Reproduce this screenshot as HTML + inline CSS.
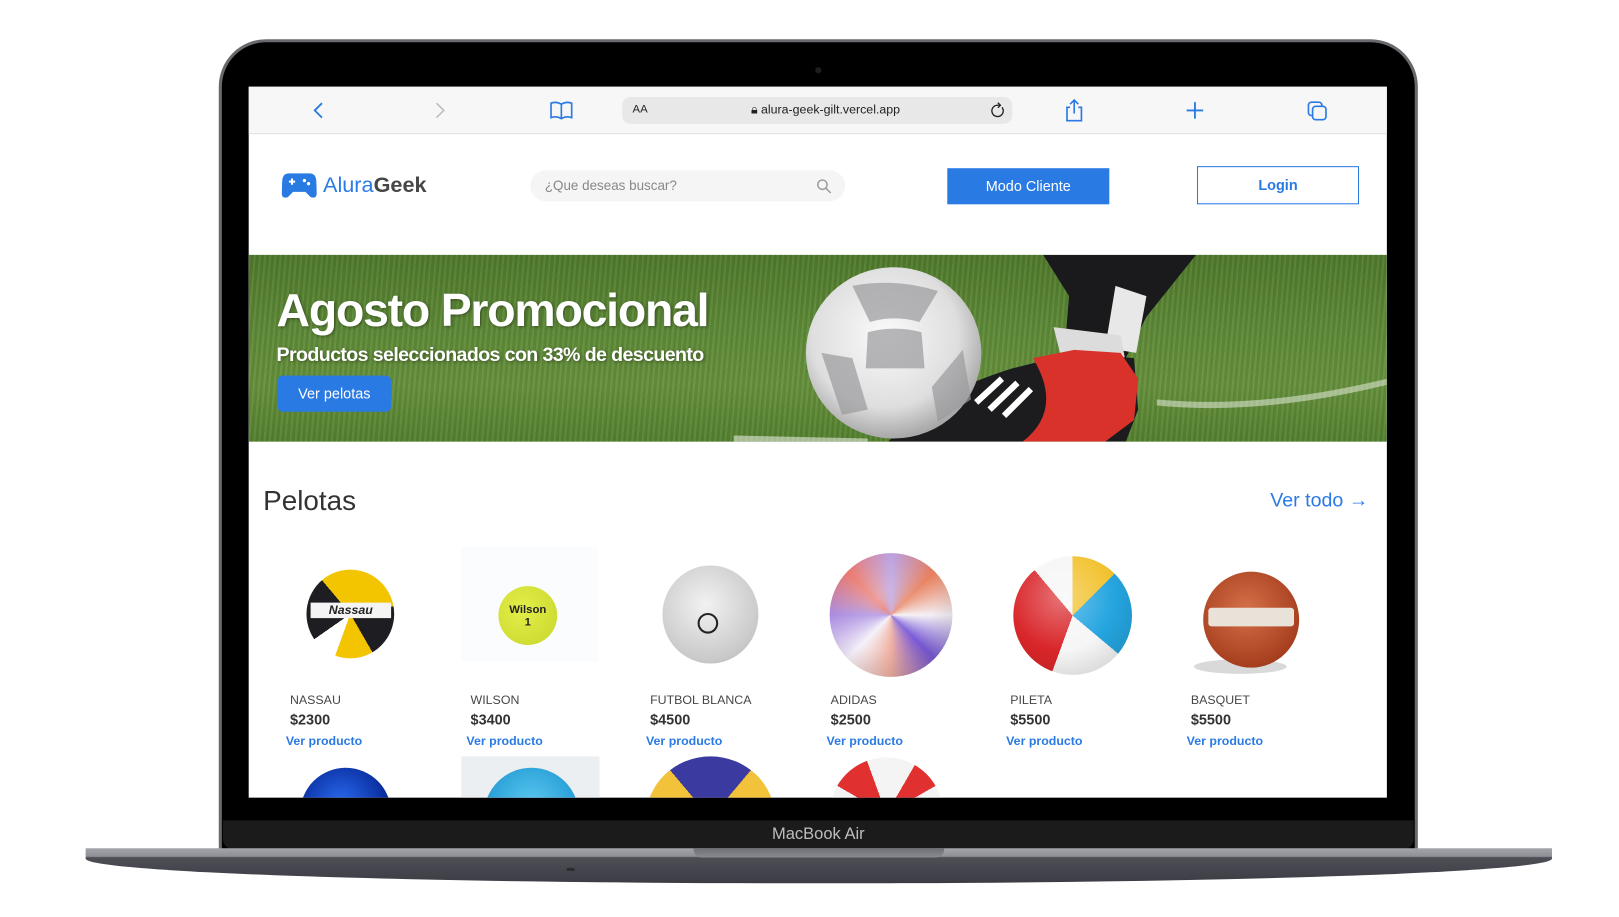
<!DOCTYPE html>
<html><head><meta charset="utf-8">
<style>
*{margin:0;padding:0;box-sizing:border-box}
html,body{width:1619px;height:917px;overflow:hidden;background:#fff;font-family:"Liberation Sans",sans-serif}
#wrap{position:absolute;left:0;top:0;width:1569px;height:889px;transform:scale(1.0319);transform-origin:0 0}
.abs{position:absolute}
.body{left:212px;top:38px;width:1162px;height:800px;background:#000;border-radius:46px 46px 10px 10px;border:3px solid #6a6a6e}
.chin{left:216px;top:795px;width:1154px;height:28px;background:#1b1b1b;border-radius:0 0 10px 10px}
.base{left:83px;top:822px;width:1421px;height:34px;border-radius:0 0 700px 700px/0 0 24px 24px;background:linear-gradient(#a4a5aa 0,#8e8f95 8px,#4d4e56 9px,#3b3c44 100%)}
.notch{left:672px;top:822px;width:243px;height:9px;background:linear-gradient(#6f7077,#8a8b90);border-radius:0 0 8px 8px}
.screen{left:241px;top:84px;width:1103px;height:689px;background:#fff;overflow:hidden}
.bar{left:0;top:0;width:1103px;height:46px;background:#f7f7f7;border-bottom:1px solid #e2e2e2}
.url{left:362px;top:10px;width:378px;height:26px;background:#e8e8e8;border-radius:8px;font-size:12px;color:#222}
.blue{color:#2a7ae4}
.btn{background:#2a7ae4;color:#fff;text-align:center;font-size:14px}
.name{position:absolute;top:587px;font-size:12px;color:#464646}
.price{position:absolute;top:605px;font-size:14px;font-weight:bold;color:#333}
.ver{position:absolute;top:627px;font-size:12px;font-weight:bold;color:#2a7ae4}
.ball{position:absolute;border-radius:50%}
.shade{position:absolute;border-radius:50%;background:radial-gradient(circle at 40% 35%,rgba(255,255,255,.35),rgba(0,0,0,0) 50%,rgba(0,0,0,.2) 100%)}
</style></head><body>
<div id="wrap">
<div class="abs body"></div>
<div class="abs" style="left:790px;top:65px;width:6px;height:6px;border-radius:50%;background:#1e1e22"></div>
<div class="abs chin"></div>
<div class="abs" style="left:216px;top:800px;width:1154px;text-align:center;font-size:16px;color:#bdbdbd">MacBook Air</div>
<div class="abs base"></div>
<div class="abs notch"></div>
<div class="abs" style="left:549px;top:841px;width:8px;height:3px;border-radius:2px;background:#2a2b30"></div>

<div class="abs screen">
 <div class="abs bar">
  <svg class="abs" style="left:60px;top:13px" width="16" height="20"><path d="M11 3 L4 10 L11 17" fill="none" stroke="#2a7ae4" stroke-width="1.8"/></svg>
  <svg class="abs" style="left:177px;top:13px" width="16" height="20"><path d="M5 3 L12 10 L5 17" fill="none" stroke="#bbb" stroke-width="1.5"/></svg>
  <svg class="abs" style="left:291px;top:13px" width="24" height="20"><path d="M2 3 Q7 1 12 4 Q17 1 22 3 V17 Q17 15 12 18 Q7 15 2 17 Z M12 4 V18" fill="none" stroke="#2a7ae4" stroke-width="1.6"/></svg>
  <div class="abs url">
   <span class="abs" style="left:10px;top:6px;font-size:11px">AA</span>
   <span class="abs" style="left:112px;top:5px;width:170px;text-align:center">&#128274;&#xFE0E; alura-geek-gilt.vercel.app</span>
   <svg class="abs" style="left:356px;top:4px" width="16" height="18"><path d="M12 6 A5.5 5.5 0 1 1 7 4 L10 4 M8 1.5 L10.5 4 L8 6.5" fill="none" stroke="#222" stroke-width="1.3"/></svg>
  </div>
  <svg class="abs" style="left:790px;top:11px" width="20" height="24"><path d="M6 9 H3 V22 H17 V9 H14 M10 15 V2 M6 6 L10 2 L14 6" fill="none" stroke="#2a7ae4" stroke-width="1.6"/></svg>
  <svg class="abs" style="left:908px;top:14px" width="18" height="18"><path d="M9 1 V17 M1 9 H17" stroke="#2a7ae4" stroke-width="1.8"/></svg>
  <svg class="abs" style="left:1025px;top:13px" width="22" height="22"><rect x="2" y="2" width="13" height="13" rx="3" fill="none" stroke="#2a7ae4" stroke-width="1.6"/><rect x="6" y="6" width="13" height="13" rx="3" fill="#f7f7f7" stroke="#2a7ae4" stroke-width="1.6"/></svg>
 </div>

 <svg class="abs" style="left:32px;top:83px" width="34" height="26" viewBox="0 0 34 26"><path d="M7 1 H27 Q33 1 33.5 8 L34 20 Q34 26 28 24 L23 19 H11 L6 24 Q0 26 0 20 L0.5 8 Q1 1 7 1Z" fill="#2a7ae4"/><path d="M7 9 H13 M10 6 V12" stroke="#fff" stroke-width="2"/><circle cx="22" cy="8" r="1.6" fill="#fff"/><circle cx="26" cy="11" r="1.6" fill="#fff"/></svg>
 <div class="abs" style="left:72px;top:84px;font-size:21px"><span class="blue">Alura</span><b style="color:#464646">Geek</b></div>
 <div class="abs" style="left:273px;top:81px;width:305px;height:30px;background:#f5f5f5;border-radius:15px;font-size:13px;color:#888;padding:7px 14px">¿Que deseas buscar?
  <svg class="abs" style="left:277px;top:8px" width="15" height="15"><circle cx="6" cy="6" r="4.5" fill="none" stroke="#999" stroke-width="1.4"/><path d="M9.5 9.5 L14 14" stroke="#999" stroke-width="1.4"/></svg></div>
 <div class="abs btn" style="left:677px;top:79px;width:157px;height:35px;line-height:34px">Modo Cliente</div>
 <div class="abs" style="left:919px;top:77px;width:157px;height:37px;border:1.5px solid #2a7ae4;color:#2a7ae4;text-align:center;line-height:35px;font-size:14px;font-weight:bold">Login</div>

 <div class="abs" style="left:0;top:163px;width:1103px;height:181px;overflow:hidden;background:
   repeating-linear-gradient(95deg,rgba(255,255,255,.05) 0 2px,rgba(0,0,0,.06) 2px 5px),
   linear-gradient(180deg,#4f7a2c 0%,#5e8a37 40%,#66903c 70%,#54812f 100%)">
  <svg class="abs" style="left:0;top:0" width="1103" height="181">
   <defs><radialGradient id="bg" cx="45%" cy="40%" r="60%"><stop offset="0" stop-color="#fafafa"/><stop offset=".7" stop-color="#dedede"/><stop offset="1" stop-color="#a8a8a8"/></radialGradient></defs>
   <path d="M880 140 Q980 150 1103 120 L1103 126 Q980 156 880 146Z" fill="rgba(255,255,255,.45)"/>
   <path d="M470 175 L600 178 L600 181 L470 181Z" fill="rgba(255,255,255,.5)"/>
   <path d="M770 0 H918 L870 60 L845 110 L790 100 L795 40Z" fill="#1a1a1c"/>
   <path d="M840 30 L870 40 L860 95 L830 90Z" fill="#e8e8e8"/>
   <path d="M780 70 L845 78 L850 105 L790 110Z" fill="#dcdcdc"/>
   <path d="M625 175 Q660 135 740 110 L800 95 L858 100 L862 150 L850 181 H620Z" fill="#1c1c1e"/>
   <path d="M760 100 L800 92 L845 95 L862 120 L858 160 L830 181 L750 181 Q790 150 760 100Z" fill="#d9322a"/>
   <path d="M705 143 L730 120 M718 150 L745 124 M732 156 L758 130" stroke="#fff" stroke-width="6"/>
   <ellipse cx="625" cy="95" rx="85" ry="83" fill="url(#bg)"/>
   <path d="M585 30 Q626 22 668 35 L650 65 Q626 58 602 65Z M555 95 L585 100 L600 150 L575 155Z M692 92 L700 140 L668 162 L662 128Z M600 75 Q626 68 652 75 L655 110 L598 110Z" fill="#9a9a9e" opacity=".7"/>
  </svg>
  <div class="abs" style="left:27px;top:28px;font-size:45px;font-weight:bold;color:#fff;letter-spacing:-1.2px;text-shadow:1px 1px 3px rgba(0,0,0,.4)">Agosto Promocional</div>
  <div class="abs" style="left:27px;top:87px;font-size:19px;font-weight:bold;color:#fff;letter-spacing:-.6px;text-shadow:1px 1px 3px rgba(0,0,0,.4)">Productos seleccionados con 33% de descuento</div>
  <div class="abs btn" style="left:28px;top:117px;width:110px;height:35px;line-height:35px;border-radius:5px">Ver pelotas</div>
 </div>

 <div class="abs" style="left:14px;top:386px;font-size:27px;color:#333">Pelotas</div>
 <div class="abs blue" style="left:990px;top:391px;font-size:19px">Ver todo &#8594;</div>

 <div class="ball" style="left:56px;top:468px;width:85px;height:86px;background:conic-gradient(from 20deg,#f3c400 0 60deg,#1e1e22 60deg 130deg,#f3c400 130deg 180deg,#fff 180deg 215deg,#1e1e22 215deg 300deg,#f3c400 300deg 360deg)"></div>
 <div class="abs" style="left:60px;top:500px;width:78px;height:15px;background:#f4f4f4;font-size:12px;font-weight:bold;font-style:italic;text-align:center;color:#222">Nassau</div>
 <div class="abs" style="left:206px;top:446px;width:133px;height:111px;background:#fbfcfd"></div>
 <div class="ball" style="left:242px;top:484px;width:57px;height:57px;background:radial-gradient(circle at 40% 40%,#e4ef4a,#c6d52a);font-size:11px;font-weight:bold;text-align:center;padding-top:17px;color:#222">Wilson<br>1</div>
 <div class="ball" style="left:401px;top:464px;width:93px;height:95px;background:radial-gradient(circle at 45% 40%,#f2f2f2,#c9c9c9 70%,#aaa)"></div>
 <div class="ball" style="left:435px;top:510px;width:20px;height:20px;border:2px solid #222"></div>
 <div class="ball" style="left:563px;top:452px;width:119px;height:120px;background:conic-gradient(#b59ae0,#e8805e,#f4f0f4,#7a5ad8,#f0b0a0,#f4f0f8,#a88ae0,#e86a5e,#b59ae0)"></div>
 <div class="shade" style="left:563px;top:452px;width:119px;height:120px"></div>
 <div class="ball" style="left:741px;top:455px;width:115px;height:115px;background:conic-gradient(from 0deg,#f2c230 0 45deg,#25a5e0 45deg 130deg,#f6f6f6 130deg 200deg,#d9262a 200deg 320deg,#f6f6f6 320deg 360deg)"></div>
 <div class="shade" style="left:741px;top:455px;width:115px;height:115px"></div>
 <div class="abs" style="left:916px;top:555px;width:90px;height:14px;border-radius:50%;background:rgba(0,0,0,.15)"></div>
 <div class="ball" style="left:925px;top:470px;width:93px;height:93px;background:radial-gradient(circle at 45% 40%,#d5714a,#a8401f 70%,#7a2c14)"></div>
 <div class="abs" style="left:930px;top:505px;width:83px;height:18px;background:#e9e2d8;border-radius:3px"></div>

 <div class="name" style="left:40px">NASSAU</div><div class="price" style="left:40px">$2300</div><div class="ver" style="left:36px">Ver producto</div>
 <div class="name" style="left:215px">WILSON</div><div class="price" style="left:215px">$3400</div><div class="ver" style="left:211px">Ver producto</div>
 <div class="name" style="left:389px">FUTBOL BLANCA</div><div class="price" style="left:389px">$4500</div><div class="ver" style="left:385px">Ver producto</div>
 <div class="name" style="left:564px">ADIDAS</div><div class="price" style="left:564px">$2500</div><div class="ver" style="left:560px">Ver producto</div>
 <div class="name" style="left:738px">PILETA</div><div class="price" style="left:738px">$5500</div><div class="ver" style="left:734px">Ver producto</div>
 <div class="name" style="left:913px">BASQUET</div><div class="price" style="left:913px">$5500</div><div class="ver" style="left:909px">Ver producto</div>

 <div class="ball" style="left:50px;top:660px;width:88px;height:88px;background:radial-gradient(circle at 45% 40%,#2b6cf0,#0a2ea0 60%,#111)"></div>
 <div class="abs" style="left:206px;top:649px;width:134px;height:50px;background:#eceff1"></div>
 <div class="ball" style="left:228px;top:660px;width:92px;height:92px;background:radial-gradient(circle at 50% 40%,#5cc8f0,#2aa0d8 60%,#111)"></div>
 <div class="ball" style="left:385px;top:649px;width:125px;height:120px;background:conic-gradient(from 200deg,#f2c23a 0 120deg,#3a3aa0 120deg 200deg,#f2c23a 200deg)"></div>
 <div class="ball" style="left:563px;top:650px;width:110px;height:110px;background:conic-gradient(from 300deg,#e03030 0 40deg,#f4f4f4 40deg 90deg,#e03030 90deg 120deg,#f4f4f4 120deg)"></div>
</div>
</div>
</body></html>
